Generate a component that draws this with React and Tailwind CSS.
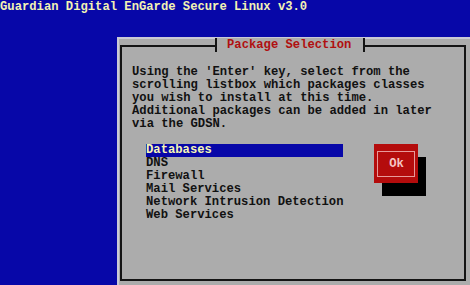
const packages = [
  'Databases',
  'DNS',
  'Firewall',
  'Mail Services',
  'Network Intrusion Detection',
  'Web Services',
];

function OkButton() {
  return (
    <div className="w-[44px] h-[39px] bg-[#b40c0c] shadow-[8px_13px_0_#000] pt-[7px] pl-[3px] pr-[3px] pb-[6px]">
      <div className="h-full border border-[#e89a9a] flex items-center justify-center text-[#f4c4c4]">
        Ok
      </div>
    </div>
  );
}

export default function App() {
  return (
    <div className="w-[470px] h-[285px] overflow-hidden bg-[#0707a8] font-['Liberation_Mono',monospace] font-bold text-[12.2px] leading-[13px] whitespace-pre">
      <div className="h-[37px] pt-[1px] text-[#f2f2b4]">Guardian Digital EnGarde Secure Linux v3.0</div>

      <div className="ml-[117px] h-[248px] bg-[#acacac] border-l-2 border-t-2 border-[#c9c9d6] pl-[1px] pt-[6px] pr-[4px] pb-[4px]">
        <div className="relative h-full border-2 border-[#141414] pl-[10px] pt-[19px]">
          <div className="absolute left-[93px] top-[-9px] h-[14px] w-[150px] bg-[#acacac] border-l-2 border-r-2 border-[#141414] pl-[10px] flex items-center text-[#b01010]">
            Package Selection
          </div>

          <div className="text-[#111]">
            <div>Using the 'Enter' key, select from the</div>
            <div>scrolling listbox which packages classes</div>
            <div>you wish to install at this time.</div>
            <div>Additional packages can be added in later</div>
            <div>via the GDSN.</div>
          </div>

          <div className="flex mt-[13px] ml-[14px] gap-[31px]">
            <div className="flex flex-col text-[#111]">
              {packages.map((p, i) => (
                <div key={p} className={i === 0 ? 'bg-[#0707a8] text-[#f6f6b6]' : ''}>
                  {p}
                </div>
              ))}
            </div>
            <OkButton />
          </div>
        </div>
      </div>
    </div>
  );
}
